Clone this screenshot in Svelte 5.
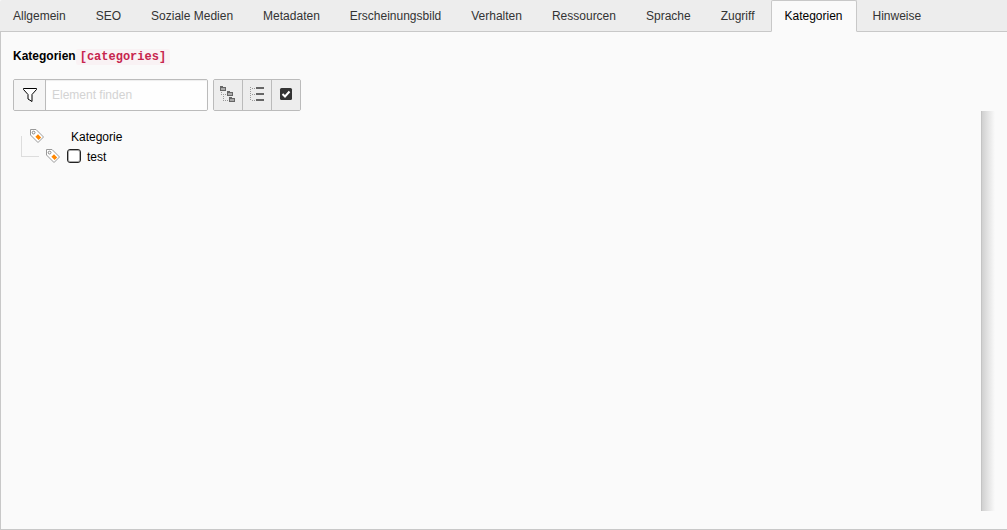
<script>
  const tabs = ['Allgemein', 'SEO', 'Soziale Medien', 'Metadaten', 'Erscheinungsbild', 'Verhalten', 'Ressourcen', 'Sprache', 'Zugriff', 'Kategorien', 'Hinweise'];
  let active = $state('Kategorien');
  let query = $state('');
  let checked = $state(false);
</script>

{#snippet tag()}
  <svg class="tag" width="16" height="16" viewBox="0 0 16 16" aria-hidden="true">
    <path d="M1.5 .5H7L14.5 8 9 13.5 1.5 6z" fill="#fff" stroke="#999" />
    <circle cx="4.6" cy="3.6" r="1.4" fill="#fff" stroke="#888" />
    <path d="M9 5.2 12.2 8.4 9.6 11 6.4 7.8z" fill="#ff8700" />
  </svg>
{/snippet}

{#snippet folder(x, y)}
  <path d="M{x} {y}h3v1h3v4h-6z" fill="#666" />
  <path d="M{x + 1} {y + 2}h4v2h-4z" fill="#aaa" />
{/snippet}

<div class="page">
  <div class="tabs" role="tablist">
    {#each tabs as name}
      <button type="button" class="tab" class:active={active === name} role="tab" aria-selected={active === name} onclick={() => (active = name)}>{name}</button>
    {/each}
  </div>

  <main class="panel">
    <div class="heading"><strong>Kategorien</strong><code>[categories]</code></div>

    <div class="toolbar">
      <div class="search">
        <label class="addon" for="filter" aria-label="Element finden">
          <svg width="16" height="16" viewBox="0 0 16 16" aria-hidden="true">
            <path d="M1.5 1.5h13v1L10 7.5v7L6 12V7.5l-4.5-5z" fill="#fff" stroke="#000" stroke-linejoin="round" />
          </svg>
        </label>
        <input id="filter" type="text" placeholder="Element finden" bind:value={query} />
      </div>
      <div class="group">
        <button type="button" class="tool" aria-label="Expand all">
          <svg width="16" height="18" viewBox="0 0 16 18" shape-rendering="crispEdges" aria-hidden="true">
            {@render folder(0, 0)}
            {@render folder(7, 5)}
            {@render folder(9, 11)}
            <path d="M1.5 6v3M1 8.5h6M3.5 10v5M3 14.5h6" fill="none" stroke="#999" stroke-dasharray="1 1" />
          </svg>
        </button>
        <button type="button" class="tool" aria-label="Collapse all">
          <svg width="16" height="16" viewBox="0 0 16 16" shape-rendering="crispEdges" aria-hidden="true">
            <path d="M1.5 0v14M3 1.5h3M3 7.5h3M3 13.5h3" fill="none" stroke="#999" stroke-dasharray="1 1" />
            <path d="M7 0h8v2H7zM7 6h8v2H7zM7 12h8v2H7z" fill="#666" />
          </svg>
        </button>
        <button type="button" class="tool" aria-label="Hide unchecked">
          <svg width="16" height="16" viewBox="0 0 16 16" aria-hidden="true">
            <rect x="2" y="1" width="12" height="12" rx="1.5" fill="#333" />
            <path d="M4.5 7 7 9.5 11.5 4.5" fill="none" stroke="#fff" stroke-width="2" />
          </svg>
        </button>
      </div>
    </div>

    <div class="tree">
      <ul role="tree">
        <li class="root" role="treeitem" aria-selected="false" aria-expanded="true">
          <div class="node">{@render tag()}<span>Kategorie</span></div>
          <ul class="children" role="group">
            <li role="treeitem" aria-selected={checked}>
              <label class="node leaf">{@render tag()}<input type="checkbox" bind:checked /><span>test</span></label>
            </li>
          </ul>
        </li>
      </ul>
      <div class="shade"></div>
    </div>
  </main>
</div>

<style>
  :global(body) {
    background: #fafafa;
  }
  .page {
    display: flex;
    flex-direction: column;
    min-height: 100vh;
    font: 12px/18px "Liberation Sans", Arial, sans-serif;
    color: #000;
  }
  .page, .page *, .page *::before {
    box-sizing: border-box;
  }
  button, input {
    font: inherit;
    margin: 0;
  }
  .tabs {
    display: flex;
    gap: 3px;
    height: 32px;
    background: #ededed;
    border-bottom: 1px solid #c8c8c8;
    border-top-left-radius: 2px;
  }
  .tab {
    height: 32px;
    padding: 0 13px 0 12px;
    border: 1px solid transparent;
    border-radius: 2px 2px 0 0;
    background: none;
    color: #333;
    white-space: nowrap;
  }
  .tab.active {
    border-color: #c8c8c8;
    border-bottom-color: #fafafa;
    background: #fafafa;
    color: #000;
  }
  .panel {
    flex: 1;
    padding: 15px 12px 18px;
    border: solid #c8c8c8;
    border-width: 0 0 1px 1px;
  }
  .heading {
    display: flex;
    align-items: baseline;
    height: 18px;
  }
  code {
    padding: 1px 4px;
    border-radius: 2px;
    background: #f9f2f4;
    color: #c7254e;
    font: bold 12px/14px "Liberation Mono", monospace;
  }
  .toolbar {
    display: flex;
    gap: 5px;
    margin-top: 14px;
  }
  .search, .group {
    display: flex;
    height: 32px;
    border: 1px solid #bbb;
    border-radius: 2px;
    overflow: hidden;
  }
  .search {
    width: 195px;
  }
  .addon {
    display: flex;
    align-items: center;
    justify-content: center;
    width: 32px;
    background: #f5f5f5;
    border-right: 1px solid #bbb;
  }
  .search input {
    flex: 1;
    min-width: 0;
    padding: 0 6px;
    border: 0;
    background: #fefefe;
    box-shadow: inset 0 1px 1px #0001;
  }
  .search input::placeholder {
    color: #d3d3d3;
    opacity: 1;
  }
  .tool {
    display: flex;
    align-items: center;
    justify-content: center;
    width: 28px;
    padding: 0;
    border: 0;
    background: #ededed;
  }
  .tool + .tool {
    width: 29px;
    border-left: 1px solid #bbb;
  }
  .tree {
    display: flex;
    justify-content: space-between;
    height: 400px;
  }
  ul {
    list-style: none;
    margin: 0;
    padding: 0;
  }
  .tree > ul {
    padding: 16px 0 0 8px;
  }
  .node {
    display: flex;
    align-items: center;
    height: 20px;
  }
  .root > .node {
    gap: 26px;
    padding-left: 8px;
  }
  .children {
    display: flex;
    align-items: flex-start;
    margin-top: -11px;
  }
  .children::before {
    content: "";
    width: 18px;
    height: 21px;
    border: solid #ddd;
    border-width: 0 0 1px 1px;
  }
  .children > li {
    padding: 11px 0 0 6px;
  }
  .tag {
    flex: none;
  }
  .leaf input {
    appearance: none;
    width: 14px;
    height: 14px;
    margin: 0 6px 2px;
    border: 1px solid #222;
    border-radius: 3px;
    background: #fff;
    box-shadow: inset 0 0 0 1px #0005;
  }
  .leaf input:checked {
    background: #333;
  }
  .shade {
    width: 14px;
    border-left: 1px solid #c4c4c4;
    background: linear-gradient(to right, #d0d0d0, #fafafa);
  }
</style>
